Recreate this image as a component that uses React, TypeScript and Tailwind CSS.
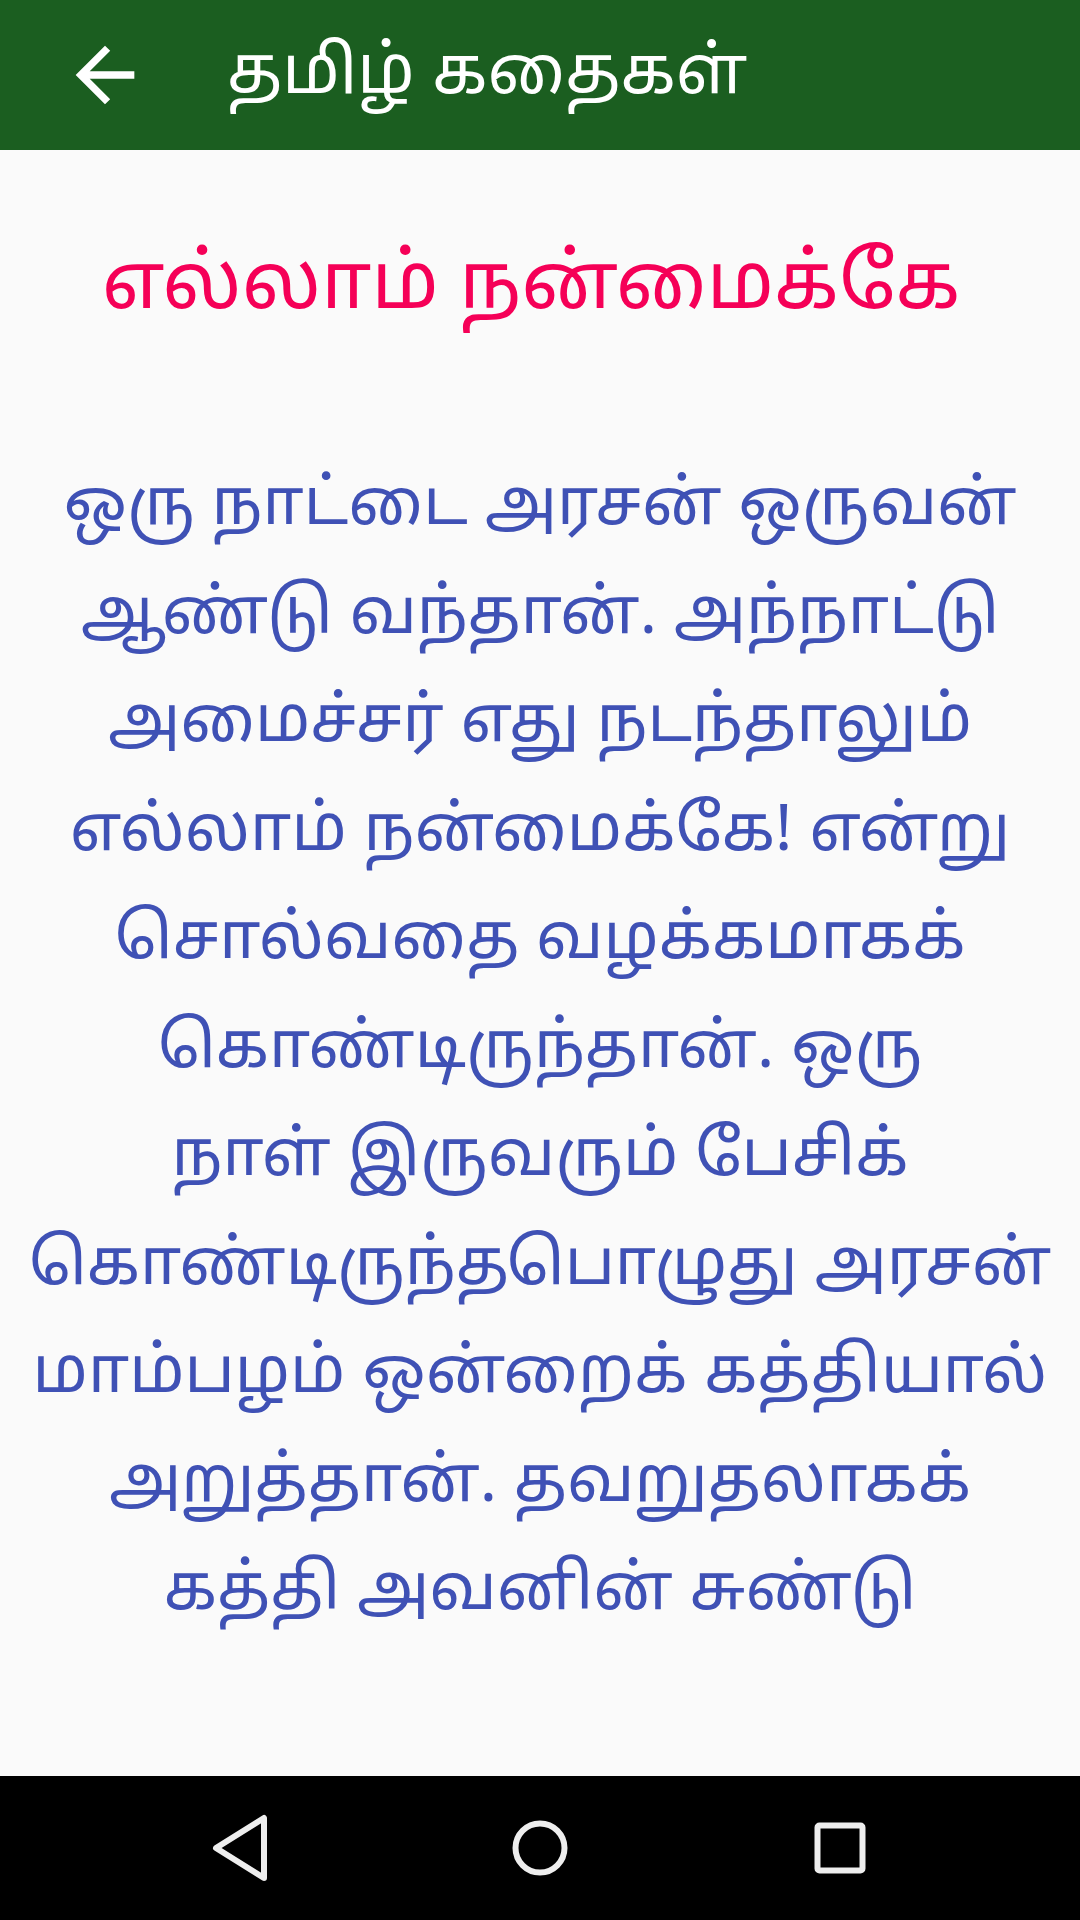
const lines = [
    "ஒரு நாட்டை அரசன் ஒருவன்",
    "ஆண்டு வந்தான். அந்நாட்டு",
    "அமைச்சர் எது நடந்தாலும்",
    "எல்லாம் நன்மைக்கே! என்று",
    "சொல்வதை வழக்கமாகக்",
    "கொண்டிருந்தான். ஒரு",
    "நாள் இருவரும் பேசிக்",
    "கொண்டிருந்தபொழுது அரசன்",
    "மாம்பழம் ஒன்றைக் கத்தியால்",
    "அறுத்தான். தவறுதலாகக்",
    "கத்தி அவனின் சுண்டு",
];

const App = () => {
    return (
        <div className="w-[1080px] h-[1920px] flex flex-col bg-[#fafafa] font-['Noto_Sans_Tamil','Noto_Sans',sans-serif] overflow-hidden">
            <div className="h-[150px] bg-[#1b5e20] flex items-center shrink-0">
                <div className="w-[227px] pl-[61px] flex items-center">
                    <svg width="88" height="88" viewBox="0 0 24 24" fill="white">
                        <path d="M20 11H7.83l5.59-5.59L12 4l-8 8 8 8 1.41-1.41L7.83 13H20v-2z" />
                    </svg>
                </div>
                <h1 className="text-white text-[67px] leading-[90px] pt-[4px]">தமிழ் கதைகள்</h1>
            </div>

            <div className="flex-1 flex flex-col items-center">
                <h2 className="mt-[89px] pr-[18px] text-[#f50057] text-[78.5px] leading-[100px]">
                    எல்லாம் நன்மைக்கே
                </h2>
                <div className="mt-[115px] flex flex-col items-center text-[#3f51b5] text-[64.5px] leading-[108.5px]">
                    {lines.map((line, i) => (
                        <p key={i} className="whitespace-nowrap">
                            {line}
                        </p>
                    ))}
                </div>
            </div>

            <div className="h-[144px] bg-black flex items-center justify-center shrink-0">
                <div className="w-[300px] flex justify-center">
                    <svg width="60" height="70" viewBox="0 0 60 70">
                        <path
                            d="M54 5 L54 65 L6 35 Z"
                            fill="none"
                            stroke="#eeeeee"
                            strokeWidth="6"
                            strokeLinejoin="round"
                        />
                    </svg>
                </div>
                <div className="w-[300px] flex justify-center">
                    <svg width="60" height="60" viewBox="0 0 60 60">
                        <circle cx="30" cy="30" r="24.5" fill="none" stroke="#eeeeee" strokeWidth="6" />
                    </svg>
                </div>
                <div className="w-[300px] flex justify-center">
                    <svg width="60" height="60" viewBox="0 0 60 60">
                        <rect x="7.5" y="7.5" width="45" height="45" rx="2" fill="none" stroke="#eeeeee" strokeWidth="6" />
                    </svg>
                </div>
            </div>
        </div>
    );
};

export default App;
